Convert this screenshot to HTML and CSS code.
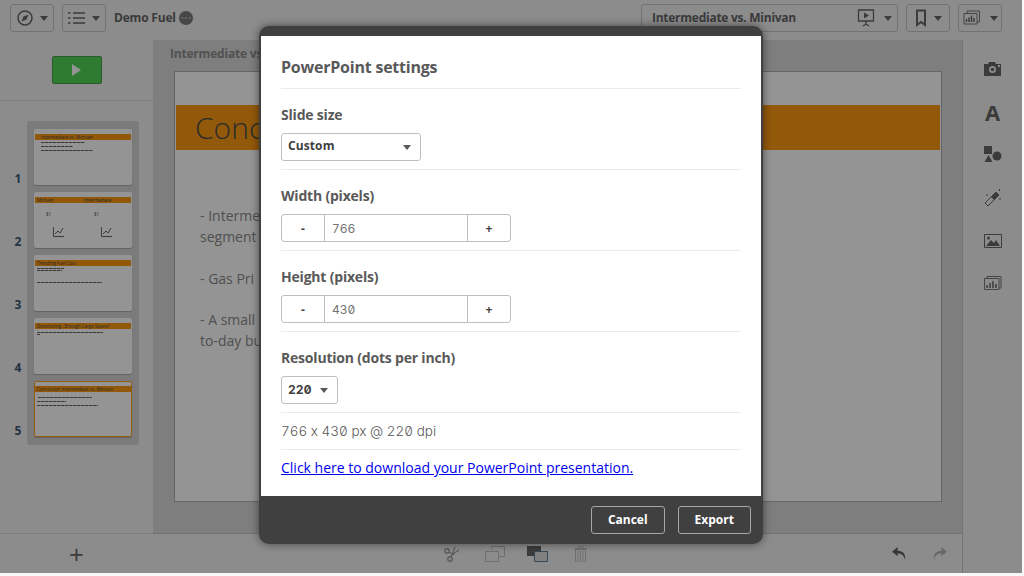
FILE: index.html
```html
<!DOCTYPE html>
<html lang="en">
<head>
<meta charset="utf-8">
<title>PowerPoint settings</title>
<link rel="stylesheet" href="styles.css">
</head>
<body>
<div class="app">
  <header class="topbar">
    <button class="tool w44"><svg width="16" height="16" viewBox="0 0 16 16"><circle cx="8" cy="8" r="7" fill="none" stroke="#666" stroke-width="1.5"/><path d="M11.500 4.500 9.500 9.500 4.500 11.500 6.500 6.500Z" fill="#666"/></svg><i class="caret"></i></button>
    <button class="tool w44"><svg width="17" height="12" viewBox="0 0 17 12"><path d="M0 1h2.500M5 1h12M0 6h2.500M5 6h12M0 11h2.500M5 11h12" stroke="#666" stroke-width="1.700"/></svg><i class="caret"></i></button>
    <span class="app-name">Demo Fuel</span>
    <svg class="status" width="14" height="14" viewBox="0 0 14 14"><circle cx="7" cy="7" r="7" fill="#7a7a7a"/><path d="M2 7h2.500M5.800 7h2.500M9.500 7h2.500" stroke="#d0d0d0" stroke-width="1"/></svg>
    <span class="spring"></span>
    <button class="tool story"><span class="story-name">Intermediate vs. Minivan</span><svg width="20" height="20" viewBox="0 0 20 20"><path d="M1.500 2h15v11h-15z" fill="none" stroke="#666" stroke-width="1.300"/><path d="M7 4.500 12 7.500 7 10.500Z" fill="#666"/><path d="M9 13v3M6 18l3-2 3 2" stroke="#666" stroke-width="1.300" fill="none"/></svg><i class="caret"></i></button>
    <button class="tool w44"><svg width="12" height="18" viewBox="0 0 12 18"><path d="M2 1.500h8V16L6 13 2 16Z" fill="none" stroke="#666" stroke-width="2"/></svg><i class="caret"></i></button>
    <button class="tool w44"><svg width="20" height="16" viewBox="0 0 20 16"><path d="M4 3V1h12.500v11H14M1 3.500h13v10.500H1z" fill="none" stroke="#777" stroke-width="1"/><path d="M3.500 12V9M6 12V7.500M8.500 12V5.500M11 12V8" stroke="#666" stroke-width="1.500"/></svg><i class="caret"></i></button>
  </header>
  <div class="workspace">
    <aside class="sidebar">
      <div class="play-area"><button class="play" aria-label="Play"><i></i></button></div>
      <div class="thumbs-area">
        <div class="numbers">
          <span>1</span><span>2</span><span>3</span><span>4</span><span>5</span>
        </div>
        <div class="thumbs">
          <div class="thumb"><div class="thumb-bar ind">Intermediate vs. Minivan</div><div class="line first l1"></div><div class="line l2"></div><div class="line l3"></div></div>
          <div class="thumb"><div class="thumb-bar split"><span>Minivan</span><span>Intermediate</span></div>
            <div class="mini-row"><span>$1</span><span>$1</span></div>
            <div class="mini-row charts">
              <span><svg width="11" height="10" viewBox="0 0 11 10"><path d="M.500 0v9.500H11M2 7l3-3 2 2 3-5" fill="none" stroke="#666"/></svg></span>
              <span><svg width="11" height="10" viewBox="0 0 11 10"><path d="M.500 0v9.500H11M2 7l3-3 2 2 3-5" fill="none" stroke="#666"/></svg></span>
            </div>
          </div>
          <div class="thumb"><div class="thumb-bar">Trending Fuel Cost</div><div class="line flush first l4"></div><div class="line flush tight l5"></div><div class="line flush far l6"></div></div>
          <div class="thumb"><div class="thumb-bar">Downsizing...Enough Cargo Space?</div><div class="line flush l7"></div><div class="line flush tight l8"></div></div>
          <div class="thumb active"><div class="thumb-bar">Conclusion Intermediate vs. Minivan</div><div class="line flush lead l9"></div><div class="line flush l10"></div><div class="line flush l11"></div></div>
        </div>
      </div>
      <div class="add">+</div>
    </aside>
    <main class="stage">
      <div class="canvas-area">
        <div class="sheet-title">Intermediate vs</div>
        <div class="slide">
          <div class="slide-band">Conc</div>
          <div class="slide-body">
            <p>- Interme<br>segment</p>
            <p>- Gas Pri</p>
            <p>- A small<br>to-day bu</p>
          </div>
        </div>
      </div>
      <footer class="actions">
        <span class="acts-center">
          <span class="act"><svg width="16" height="16" viewBox="0 0 16 16"><circle cx="3" cy="5" r="2.200" fill="none" stroke="#9b9b9b" stroke-width="1.400"/><circle cx="6" cy="13" r="2.200" fill="none" stroke="#9b9b9b" stroke-width="1.400"/><path d="M5 6l5 3M7 11 11 1M9 8l6-4" stroke="#9b9b9b" stroke-width="1.200"/></svg></span>
          <span class="act"><svg width="20" height="16" viewBox="0 0 20 16"><path d="M6.500 4V.5h13v10H14M.5 5.500h13v10H.5z" fill="none" stroke="#bfbfbf"/></svg></span>
          <span class="act"><svg width="21" height="16" viewBox="0 0 21 16"><path d="M0 0h14v10H0z" fill="#666"/><path d="M7.500 5.500h13v10h-13z" fill="#dcdcdc" stroke="#5d7f9e"/></svg></span>
          <span class="act"><svg width="13" height="16" viewBox="0 0 13 16"><path d="M0 2.500h13M4 2.500V.5h5v2M1.500 3.500h10V16h-10z" fill="none" stroke="#bfbfbf"/><path d="M4 5v10M6.500 5v10M9 5v10" stroke="#bfbfbf"/></svg></span>
        </span>
        <span class="acts-right">
          <svg width="15" height="14" viewBox="0 0 16 15"><path d="M6 0 0 5l6 5V7c4 0 7 2 8 7 1-6-2-10-8-10Z" fill="#5f5f5f"/></svg>
          <svg width="15" height="14" viewBox="0 0 16 15"><path d="M10 0l6 5-6 5V7C6 7 3 9 2 14 1 8 4 4 10 4Z" fill="#b5b5b5"/></svg>
        </span>
      </footer>
    </main>
    <aside class="assets">
      <span class="asset"><svg width="18" height="14" viewBox="0 0 18 14"><path d="M1 2h3l1-2h6l1 2h5v12H0V2Z" fill="#666"/><circle cx="8.500" cy="7.500" r="3.500" fill="#f2f2f2"/><circle cx="8.500" cy="7.500" r="1.800" fill="#666"/><path d="M14 3h2v2h-2z" fill="#f2f2f2"/></svg></span>
      <span class="asset asset-a">A</span>
      <span class="asset"><svg width="18" height="17" viewBox="0 0 18 17"><path d="M0 0h8v8H0z" fill="#666"/><circle cx="13" cy="10" r="4.500" fill="#666"/><path d="M4.500 9 8.500 16H.500Z" fill="#666"/></svg></span>
      <span class="asset"><svg width="18" height="18" viewBox="0 0 18 18"><path d="M1 14 12 3l3 3L4 17Z" fill="#f2f2f2" stroke="#666"/><path d="M7 8 12 3l3 3-5 5Z" fill="#666"/><path d="M15.500 0v2M3 5v2M16 9v2" stroke="#666"/></svg></span>
      <span class="asset"><svg width="18" height="14" viewBox="0 0 18 14"><path d="M.500.500h17v13H.500z" fill="none" stroke="#666"/><circle cx="4.500" cy="4" r="1.500" fill="#666"/><path d="M2 12l5-6 3 3 2-3 4 6Z" fill="#666"/></svg></span>
      <span class="asset"><svg width="18" height="16" viewBox="0 0 18 16"><path d="M3 2V.500h14V12h-2M.500 2.500h14.500v11H.500z" fill="none" stroke="#777"/><path d="M3 12V9M6 12V7M9 12V5M12 12V8" stroke="#666" stroke-width="1.500"/></svg></span>
    </aside>
  </div>
</div>
<div class="overlay"></div>
<section class="dialog">
  <div class="dialog-body">
    <h1 class="dialog-title">PowerPoint settings</h1>
    <div class="group">
      <h2>Slide size</h2>
      <div class="select size-select"><b>Custom</b><i class="caret small"></i></div>
    </div>
    <div class="group">
      <h2>Width (pixels)</h2>
      <div class="stepper"><span class="step">-</span><span class="value">766</span><span class="step">+</span></div>
    </div>
    <div class="group">
      <h2>Height (pixels)</h2>
      <div class="stepper"><span class="step">-</span><span class="value">430</span><span class="step">+</span></div>
    </div>
    <div class="group">
      <h2>Resolution (dots per inch)</h2>
      <div class="select dpi-select"><b>220</b><i class="caret small"></i></div>
    </div>
    <div class="summary">766 x 430 px @ 220 dpi</div>
    <a class="download" href="#">Click here to download your PowerPoint presentation.</a>
  </div>
  <div class="dialog-footer">
    <button class="btn">Cancel</button>
    <button class="btn">Export</button>
  </div>
</section>
</body>
</html>
```
FILE: styles.css
```css
* { box-sizing: border-box; }
html, body { margin: 0; height: 100%; overflow: hidden; }
body { font-family: "Open Sans", sans-serif; background: #f8f8f8; color: #595959; }
button { font: inherit; }
.app { width: 1022px; height: 573px; display: flex; flex-direction: column; background: #f2f2f2; }
.topbar { height: 40px; flex: none; display: flex; align-items: center; padding: 0 20px 4px 10px; gap: 8px; }
.tool { height: 28px; display: flex; align-items: center; justify-content: center; gap: 7px; padding: 0; background: #f2f2f2; border: 1px solid #c4c4c4; border-radius: 3px; color: #666; }
.w44 { width: 44px; }
.caret { width: 0; height: 0; border: 4px solid transparent; border-top: 5px solid #666; border-bottom: 0; display: block; }
.caret.small { border-top-color: #595959; }
.app-name { font-size: 12px; font-weight: 700; color: #666; letter-spacing: -.2px; padding-bottom: 2px; }
.status { margin-left: -5px; }
.spring { flex: 1; }
.story { width: 257px; justify-content: flex-start; padding: 0 5px 0 10px; font-weight: 700; font-size: 12px; }
.story-name { flex: 1; text-align: left; letter-spacing: -.26px; white-space: nowrap; padding-bottom: 2px; }
.workspace { flex: 1; display: flex; min-height: 0; }
.sidebar { width: 153px; flex: none; display: flex; flex-direction: column; }
.play-area { height: 61px; flex: none; display: flex; align-items: center; justify-content: center; border-bottom: 1px solid #d4d4d4; }
.play { width: 50px; height: 28px; padding: 0; border: 1px solid #4b9b4b; border-radius: 2px; background: #52d457; display: flex; align-items: center; justify-content: center; }
.play i { width: 0; height: 0; border: 6px solid transparent; border-left: 9px solid #fff; border-right: 0; }
.thumbs-area { flex: 1; display: flex; padding: 20px 14px 0 7px; min-height: 0; }
.numbers { width: 20px; display: flex; flex-direction: column; font-size: 12px; font-weight: 700; color: #3d5570; text-align: center; padding: 49px 0 0 2px; gap: 46px; }
.numbers span { line-height: 17px; }
.thumbs { align-self: flex-start; width: 112px; height: 324px; display: flex; flex-direction: column; gap: 7px; padding: 8px 7px; background: #d4d4d4; border-radius: 3px; }
.thumb { height: 56px; flex: none; padding: 1px; background: #fff; border-radius: 2px; box-shadow: 0 1px 1px #aaa; overflow: hidden; }
.thumb.active { outline: 1px solid #ffa31a; outline-offset: -1px; }
.thumb-bar { height: 6px; margin-top: 4px; background: #fd9a14; color: #444; font-size: 4.500px; line-height: 6px; padding-left: 2px; white-space: nowrap; overflow: hidden; }
.thumb-bar.ind { padding-left: 6px; }
.thumb-bar.split { display: flex; }
.thumb-bar.split span { width: 48px; }
.line { height: 1px; margin: 3px 0 0 6px; background: repeating-linear-gradient(90deg, #666 0 3px, #b0b0b0 3px 4px); }
.line.first { margin-top: 2px; }
.flush { margin-left: 2px; }
.line.tight { margin-top: 1px; }
.line.far { margin-top: 11px; }
.line.lead { margin-top: 5px; margin-left: 3px; }
.l1 { width: 44px; } .l2 { width: 32px; } .l3 { width: 52px; }
.l4 { width: 27px; } .l5 { width: 25px; } .l6 { width: 65px; }
.l7 { width: 66px; } .l8 { width: 3px; }
.l9 { width: 54px; } .l10 { width: 29px; } .l11 { width: 61px; }
.mini-row { display: flex; font-size: 4.500px; line-height: 6px; padding: 8px 0 0 11px; color: #444; }
.mini-row span { width: 48px; flex: none; }
.mini-row.charts { padding: 10px 0 0 18px; }
.add { height: 40px; flex: none; border-top: 1px solid #d4d4d4; display: flex; align-items: center; justify-content: center; font-size: 26px; line-height: 1; color: #666; }
.stage { flex: 1; min-width: 0; display: flex; flex-direction: column; border-right: 1px solid #c8c8c8; }
.canvas-area { flex: 1; background: #d9d9d9; padding: 4px 0 0 21px; min-height: 0; border-bottom: 1px solid #c4c4c4; }
.sheet-title { font-size: 12px; font-weight: 700; line-height: 18px; margin: 1px 0 0 -4px; color: #8c8c8c; letter-spacing: -.2px; }
.slide { width: 768px; height: 431px; margin-top: 8px; background: #fff; border: 1px solid #b0b0b0; padding: 33px 1px 0; }
.slide-band { height: 45px; background: #fd9a14; color: #4a4a4a; font-size: 30px; font-weight: 300; line-height: 45px; padding-left: 19px; }
.slide-body { padding: 55px 0 0 24px; font-size: 14px; line-height: 21px; color: #8a8a8a; }
.slide-body p { margin: 0 0 20.500px; }
.actions { height: 39px; flex: none; display: flex; align-items: center; }
.acts-center { margin-left: 277px; display: flex; align-items: center; }
.act { width: 43px; display: flex; align-items: center; justify-content: center; }
.acts-right { margin-left: auto; margin-right: 15px; display: flex; gap: 25px; }
.assets { width: 59px; flex: none; display: flex; flex-direction: column; padding-top: 7px; }
.asset { height: 43px; display: flex; align-items: center; justify-content: center; }
.asset-a { font-size: 22px; font-weight: 700; color: #666; line-height: 1; }
.overlay { position: absolute; left: 0; top: 0; width: 1022px; height: 573px; background: rgba(0,0,0,.42); }
.dialog { position: absolute; left: 259px; top: 26px; width: 504px; height: 518px; display: flex; flex-direction: column; background: #404040; border-radius: 10px; padding-top: 10px; box-shadow: 0 0 8px rgba(0,0,0,.5); }
.dialog-body { flex: 1; margin: 0 2px; background: #fff; padding: 18px 20px 0; min-height: 0; }
.dialog-title { margin: 0; height: 35px; border-bottom: 1px solid #ebebeb; font-size: 16px; line-height: 27px; font-weight: 700; color: #595959; letter-spacing: -.22px; }
.group { border-bottom: 1px solid #ebebeb; height: 81px; padding-top: 16px; }
.group h2 { margin: 0 0 8px; font-size: 14px; line-height: 20px; font-weight: 700; color: #595959; letter-spacing: -.2px; }
.select { height: 28px; display: flex; align-items: center; justify-content: space-between; border: 1px solid #bfbfbf; border-radius: 3px; padding: 0 9px 0 6px; font-size: 12px; color: #404040; }
.select b { letter-spacing: .1px; line-height: 1; padding-bottom: 2px; }
.size-select { width: 140px; }
.dpi-select { width: 57px; font-family: Inter, sans-serif; font-feature-settings: "zero", "tnum"; }
.dpi-select b { padding-bottom: 0; }
.stepper { width: 230px; height: 28px; display: flex; border: 1px solid #bfbfbf; border-radius: 3px; font-size: 12px; }
.step { width: 42px; display: flex; align-items: center; justify-content: center; font-weight: 700; color: #404040; }
.value { flex: 1; display: flex; align-items: center; padding-left: 7px; font-family: Inter, sans-serif; font-feature-settings: "zero", "tnum"; border-left: 1px solid #bfbfbf; border-right: 1px solid #bfbfbf; color: #737373; }
.summary { height: 37px; border-bottom: 1px solid #ebebeb; font-family: Inter, sans-serif; font-feature-settings: "zero", "tnum", "calt" 0; font-size: 13.500px; font-weight: 300; line-height: 36px; color: #595959; }
.download { display: block; margin-top: 8px; font-size: 14px; line-height: 20px; color: #0000ee; }
.dialog-footer { height: 48px; flex: none; display: flex; justify-content: flex-end; align-items: center; gap: 13px; padding: 0 12px 0 0; }
.btn { width: 73.500px; height: 28px; padding: 0 0 2px; background: #404040; border: 1px solid #a6a6a6; border-radius: 3px; font-size: 12px; font-weight: 700; color: #fff; }
```
